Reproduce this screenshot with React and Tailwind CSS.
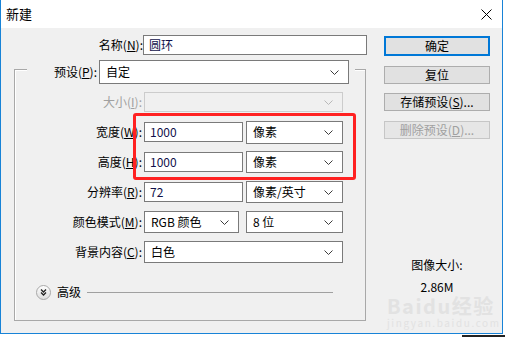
import React from "react";

const Chev = ({ c = "#3c3c3c" }) => (
  <svg width="9" height="5" viewBox="0 0 9 5" className="shrink-0">
    <polyline points="0.5,0.5 4.5,4.5 8.5,0.5" fill="none" stroke={c} strokeWidth="1" />
  </svg>
);

const Select = ({ w, h = "h-[22px]", children, disabled }) => (
  <div
    className={`${w} ${h} flex items-center justify-between pl-[6px] pr-[9px] border ${
      disabled ? "border-[#cccccc] bg-[#f0f0f0]" : "border-[#7a7a7a] bg-white"
    } box-border`}
  >
    <span className="text-[12px] leading-[14px] text-[#000]">{children}</span>
    <Chev c={disabled ? "#b8b8b8" : "#3c3c3c"} />
  </div>
);

const Input = ({ w, children }) => (
  <div className={`${w} h-[20px] flex items-center pl-[5px] border border-[#7a7a7a] bg-white box-border`}>
    <span className="text-[12px] leading-[14px] text-[#10104a]">{children}</span>
  </div>
);

const Label = ({ w = "w-[127px]", children, disabled }) => (
  <div className={`${w} text-right text-[12px] leading-[14px] ${disabled ? "text-[#a0a0a0]" : "text-[#000]"} whitespace-nowrap`}>
    {children}
  </div>
);

const Btn = ({ children, primary, disabled, mt }) => (
  <div
    className={`${mt} w-[106px] ${primary ? "h-[20px] border-2 border-[#0078d7]" : "h-[18px] border border-[#adadad]"} bg-[#e1e1e1] box-border flex items-center justify-center text-[12px] leading-[14px] ${
      disabled ? "text-[#a0a0a0] bg-[#e6e6e6] border-[#c6c6c6]" : "text-[#000]"
    }`}
  >
    {children}
  </div>
);

export default function App() {
  return (
    <div className="w-[505px] h-[337px] bg-white font-['Noto_Sans_CJK_SC','Noto_Sans',sans-serif]">
      <div className="relative w-[503px] h-[334px] border-l border-r border-b border-[#1883d7] box-border flex flex-col bg-[#f0f0f0]">
        {/* title bar */}
        <div className="h-[28px] bg-white flex items-center justify-between pl-[5px] pr-[10px]">
          <span className="text-[13px] leading-[16px] text-[#000]">新建</span>
          <svg width="11" height="11" viewBox="0 0 11 11">
            <path d="M0.5 0.5 L10.5 10.5 M10.5 0.5 L0.5 10.5" stroke="#000" strokeWidth="1" />
          </svg>
        </div>
        {/* body */}
        <div className="flex flex-1">
          {/* left */}
          <div className="w-[370px] flex flex-col">
            <div className="mt-[5px] h-[24px] flex items-center">
              <Label w="w-[142px]">
                名称(<u>N</u>):
              </Label>
              <Input w="w-[224px]">圆环</Input>
            </div>
            <div className="ml-[13px] mt-[12px] w-[352px] h-[252px] box-border border border-[#a8a8a8] shadow-[inset_1px_1px_0_#ffffff] flex flex-col">
              {/* preset row straddling the border */}
              <div className="-mt-[10px] ml-[12px] w-[328px] h-[24px] bg-[#f0f0f0] flex items-center">
                <Label w="w-[70px]">
                  预设(<u>P</u>):
                </Label>
                <div className="ml-[2px]">
                  <Select w="w-[250px]" h="h-[24px]">自定</Select>
                </div>
              </div>
              <div className="mt-[6px] h-[24px] flex items-center">
                <Label disabled>
                  大小(<u>I</u>):
                </Label>
                <div className="ml-[2px]">
                  <Select w="w-[199px]" h="h-[20px]" disabled>
                    {""}
                  </Select>
                </div>
              </div>
              <div className="mt-[6px] h-[24px] flex items-center">
                <Label>
                  宽度(<u>W</u>):
                </Label>
                <div className="ml-[2px] flex items-center gap-[3px]">
                  <Input w="w-[99px]">1000</Input>
                  <Select w="w-[97px]" h="h-[23px]">像素</Select>
                </div>
              </div>
              <div className="mt-[6px] h-[24px] flex items-center">
                <Label>
                  高度(<u>H</u>):
                </Label>
                <div className="ml-[2px] flex items-center gap-[3px]">
                  <Input w="w-[99px]">1000</Input>
                  <Select w="w-[97px]">像素</Select>
                </div>
              </div>
              <div className="mt-[6px] h-[24px] flex items-center">
                <Label>
                  分辨率(<u>R</u>):
                </Label>
                <div className="ml-[2px] flex items-center gap-[3px]">
                  <Input w="w-[99px]">72</Input>
                  <Select w="w-[97px]">像素/英寸</Select>
                </div>
              </div>
              <div className="mt-[6px] h-[24px] flex items-center">
                <Label>
                  颜色模式(<u>M</u>):
                </Label>
                <div className="ml-[2px] flex items-center gap-[7px]">
                  <Select w="w-[95px]">RGB 颜色</Select>
                  <Select w="w-[97px]">8 位</Select>
                </div>
              </div>
              <div className="mt-[6px] h-[24px] flex items-center">
                <Label>
                  背景内容(<u>C</u>):
                </Label>
                <div className="ml-[2px]">
                  <Select w="w-[199px]">白色</Select>
                </div>
              </div>
              <div className="mt-[16px] h-[24px] flex items-center ml-[21px]">
                <svg width="15" height="15" viewBox="0 0 15 15">
                  <defs>
                    <linearGradient id="g" x1="0" y1="0" x2="0" y2="1">
                      <stop offset="0" stopColor="#ffffff" />
                      <stop offset="1" stopColor="#dcdcdc" />
                    </linearGradient>
                  </defs>
                  <circle cx="7.5" cy="7.5" r="7" fill="url(#g)" stroke="#a8a8a8" strokeWidth="1" />
                  <polyline points="5,4.5 7.5,7 10,4.5" fill="none" stroke="#222" strokeWidth="1.3" />
                  <polyline points="5,7.5 7.5,10 10,7.5" fill="none" stroke="#222" strokeWidth="1.3" />
                </svg>
                <span className="ml-[6px] text-[12px] leading-[14px] text-[#000]">高级</span>
                <div className="ml-[6px] w-[246px] h-px bg-[#a0a0a0]" />
              </div>
            </div>
          </div>
          {/* right */}
          <div className="ml-[13px] w-[106px] flex flex-col items-center">
            <Btn primary mt="mt-[8px]">确定</Btn>
            <Btn mt="mt-[10px]">复位</Btn>
            <Btn mt="mt-[9px]">
              存储预设(<u>S</u>)...
            </Btn>
            <Btn mt="mt-[10px]" disabled>
              删除预设(<u>D</u>)...
            </Btn>
            <div className="mt-[118px] text-[12px] leading-[16px] text-[#000]">图像大小:</div>
            <div className="mt-[7px] text-[12px] leading-[14px] text-[#000]">2.86M</div>
          </div>
        </div>
        {/* annotation overlay */}
        <div className="absolute left-[132px] top-[113px] w-[223px] h-[67px] border-[3px] border-[#ff2121] rounded-[3px] box-border" />
        {/* watermark */}
        <div className="absolute left-[386px] top-[296px] flex flex-col items-start pointer-events-none">
          <span className="text-[20px] leading-[19px] font-bold text-[#e2e2e2] tracking-[1.5px]">Baidu经验</span>
          <span className="mt-[3px] text-[10px] leading-[10px] text-[#e2e2e2] tracking-[1.6px]">jingyan.baidu.com</span>
        </div>
      </div>
      <div className="h-[3px] pt-[1px]">
        <div className="ml-[462px] w-[43px] h-[2px] bg-[#222222]" />
      </div>
    </div>
  );
}
